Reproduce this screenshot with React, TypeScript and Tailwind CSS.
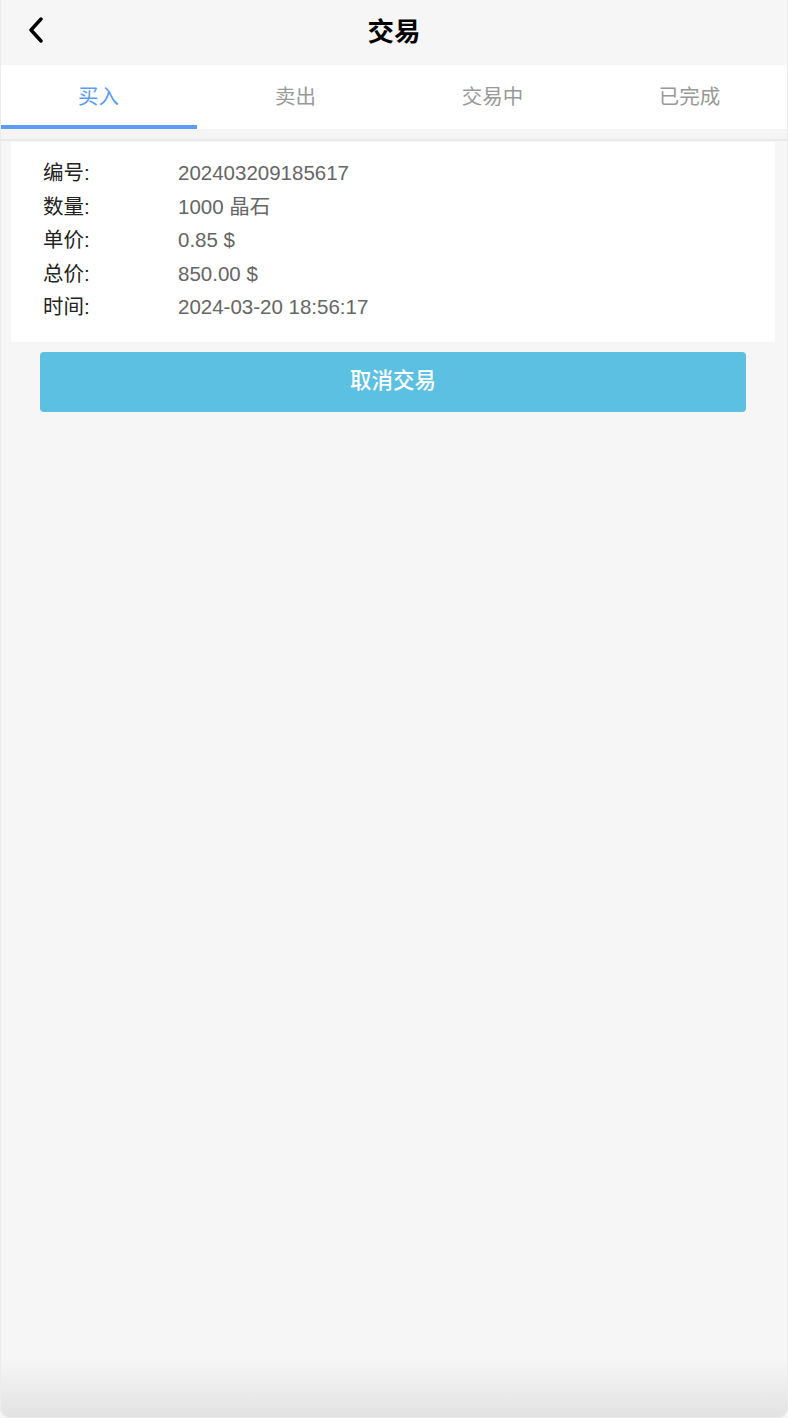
import React from "react";

const rows: [string, string][] = [
  ["编号:", "202403209185617"],
  ["数量:", "1000 晶石"],
  ["单价:", "0.85 $"],
  ["总价:", "850.00 $"],
  ["时间:", "2024-03-20 18:56:17"],
];

const tabs = ["买入", "卖出", "交易中", "已完成"];

export default function App() {
  return (
    <div
      className="relative min-h-[1418px] w-[788px] bg-[#f6f6f6] overflow-hidden"
      style={{ fontFamily: '"Liberation Sans", Arial, "Noto Sans CJK SC", sans-serif' }}
    >
      {/* Header */}
      <div className="relative flex h-[65px] items-center justify-center">
        <button className="absolute left-[26px] top-[16px] flex h-[28px] w-[20px] items-center justify-center">
          <svg width="16" height="26" viewBox="0 0 16 26" fill="none">
            <path d="M13 2 L3 13 L13 24" stroke="#000" strokeWidth="3.4" strokeLinecap="round" strokeLinejoin="round" />
          </svg>
        </button>
        <div className="text-[26.5px] font-bold leading-none text-black">交易</div>
      </div>

      {/* Tabs */}
      <div className="flex h-[64px] bg-white">
        {tabs.map((t, i) => (
          <div key={t} className="relative flex flex-1 items-center justify-center">
            <span className={`text-[20.5px] ${i === 0 ? "text-[#5a9cf8]" : "text-[#999999]"}`}>{t}</span>
            {i === 0 && <div className="absolute bottom-0 left-0 right-0 h-[4px] bg-[#5a9cf8]" />}
          </div>
        ))}
      </div>
      <div className="h-[10px] bg-[#f4f4f4]" />
      <div className="h-[2px] bg-[#e9e9e9]" />

      {/* Card */}
      <div className="ml-[11px] mr-[13px] mt-px bg-white pl-[32px] pt-[15px] pb-[17px]">
        {rows.map(([k, v]) => (
          <div key={k} className="flex h-[33.5px] items-center text-[20.5px]">
            <span className="w-[135px] text-[#222222]">{k}</span>
            <span className="text-[#666666]">{v}</span>
          </div>
        ))}
      </div>

      {/* Button */}
      <div className="pl-[40px] pr-[42px] pt-[10px]">
        <button className="flex h-[60px] w-full items-center justify-center rounded-[4px] bg-[#5bc0e2] text-[21.5px] font-medium text-white">
          取消交易
        </button>
      </div>

      {/* Bottom frame gradient */}
      <div className="pointer-events-none absolute bottom-0 left-0 right-0 h-[60px] rounded-b-[10px] bg-gradient-to-b from-transparent to-[#e2e2e2]" />
      <div className="pointer-events-none absolute inset-0 rounded-b-[10px] border border-t-0 border-[#ececec]" />
    </div>
  );
}
